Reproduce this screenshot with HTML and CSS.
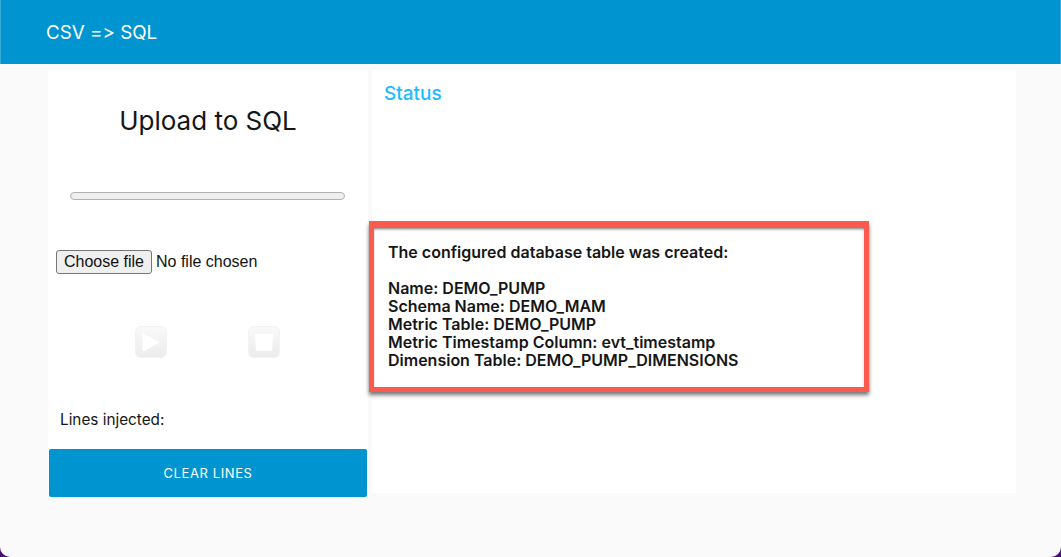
FILE: index.html
```html
<!DOCTYPE html>
<html lang="en">
<head>
<meta charset="utf-8">
<title>CSV => SQL</title>
<link rel="stylesheet" href="styles.css">
</head>
<body>
<div class="window">
  <header class="topbar"><span class="brand">CSV =&gt; SQL</span></header>
  <main class="layout">
    <section class="upload">
      <h1 class="upload-title">Upload to SQL</h1>
      <div class="progress"></div>
      <div class="file-row">
        <button class="choose" type="button">Choose file</button>
        <span class="file-name">No file chosen</span>
      </div>
      <div class="controls">
        <div class="ctrl">
          <svg width="18" height="19" viewBox="0 0 18 19"><path d="M1 1 L17 9.5 L1 18 Z" fill="#fff" stroke="#fff" stroke-width="1" stroke-linejoin="round"/></svg>
        </div>
        <div class="ctrl">
          <svg width="18" height="17" viewBox="0 0 18 17"><path d="M0 0 H18 L17 17 H1 Z" fill="#fff"/></svg>
        </div>
      </div>
      <p class="lines">Lines injected:</p>
      <button class="clear" type="button">CLEAR LINES</button>
    </section>
    <section class="status">
      <h2 class="status-title">Status</h2>
      <div class="notice">
        <p class="notice-head">The configured database table was created:</p>
        <p class="notice-body">Name: DEMO_PUMP<br>Schema Name: DEMO_MAM<br>Metric Table: DEMO_PUMP<br>Metric Timestamp Column: evt_timestamp<br>Dimension Table: DEMO_PUMP_DIMENSIONS</p>
      </div>
    </section>
  </main>
</div>
</body>
</html>
```
FILE: styles.css
```css
* { box-sizing: border-box; }
html, body { margin: 0; height: 100%; }
body {
  background: #4a0d78;
  font-family: Inter, "Liberation Sans", sans-serif;
  font-variant-ligatures: none;
  font-feature-settings: "calt" 0, "liga" 0;
  color: #161616;
  overflow: hidden;
}
.window {
  height: 557px;
  background: #fafafa;
  border-radius: 0 0 10px 10px;
  overflow: hidden;
}
.topbar {
  height: 64px;
  background: #0095d0;
  border-left: 1px solid #39a9d9;
  border-right: 1px solid #39a9d9;
  color: #fff;
  display: flex;
  align-items: center;
  padding-left: 45px;
}
.brand { font-size: 18.8px; font-weight: 400; }
.layout {
  display: flex;
  gap: 4px;
  align-items: flex-start;
  margin: 6px 0 0 48px;
}
.upload {
  width: 320px;
  height: 423px;
  background: #fff;
  display: flex;
  flex-direction: column;
}
.upload > * { flex: none; }
.upload-title {
  margin: 35px 0 0;
  text-align: center;
  font-size: 26px;
  line-height: 32px;
  font-weight: 400;
}
.progress {
  width: 275px;
  height: 8px;
  margin: 55px 0 0 22px;
  background: #efefef;
  border: 1px solid #b2b2b2;
  border-radius: 4px;
}
.file-row {
  margin: 50px 0 0 8px;
  height: 24px;
  display: flex;
  align-items: center;
  gap: 4px;
  font-family: "Liberation Sans", Arial, sans-serif;
  font-size: 16px;
  color: #111;
}
.choose {
  font: inherit;
  height: 24px;
  width: 96px;
  padding: 0;
  background: #efefef;
  border: 1px solid #767676;
  border-radius: 3px;
  color: #111;
}
.controls {
  display: flex;
  gap: 81px;
  margin: 52px 0 0 87px;
}
.ctrl {
  width: 32px;
  height: 32px;
  border-radius: 6px;
  border: 1px solid #f2f2f2;
  background: linear-gradient(#f9f9f9, #ececec);
  display: flex;
  align-items: center;
  justify-content: center;
}
.lines {
  margin: 52px 0 0 12px;
  font-size: 15.3px;
  line-height: 20px;
}
.clear {
  width: 318px;
  height: 48px;
  margin: 19px 0 0 1px;
  border: 0;
  border-radius: 2px;
  background: #0095d0;
  color: #fff;
  font-family: inherit;
  font-size: 13px;
  font-weight: 400;
  letter-spacing: 0.6px;
}
.status {
  position: relative;
  width: 644px;
  height: 423px;
  background: #fff;
  padding: 12px 0 0 12px;
}
.status-title {
  margin: 0;
  font-size: 19px;
  line-height: 24px;
  font-weight: 500;
  color: #1ebbff;
}
.notice {
  position: absolute;
  left: -3px;
  top: 152px;
  width: 500px;
  height: 170px;
  background: #fff;
  border: 5px solid #fb5a4f;
  box-shadow: 0 -1px 0 #fb5a4f, 0 3px 4px rgba(0,0,0,.55), inset 0 3px 3px -1px rgba(0,0,0,.55);
  padding: 16px 0 0 14px;
  font-size: 16px;
  line-height: 18px;
  font-weight: 600;
}
.notice p { margin: 0; }
.notice .notice-body { margin-top: 18px; }
```
